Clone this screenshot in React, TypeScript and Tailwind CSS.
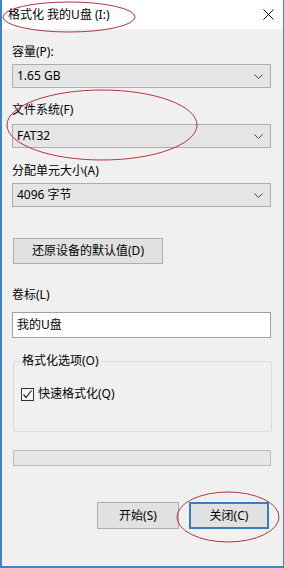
import React from "react";

const font = { fontFamily: '"Noto Sans", "Noto Sans CJK SC", sans-serif' };

const Chevron = () => (
  <svg width="9" height="5" viewBox="0 0 9 5" className="shrink-0">
    <path d="M0.5 0.5 L4.5 4.5 L8.5 0.5" fill="none" stroke="#4a4a4a" strokeWidth="1" />
  </svg>
);

const Select = ({ value }: { value: string }) => (
  <div className="flex h-[24px] w-[259px] items-center justify-between border border-[#adadad] bg-[#e5e5e5] pl-[4px] pr-[7px] text-[12px] text-black">
    <span>{value}</span>
    <Chevron />
  </div>
);

export default function App() {
  return (
    <div
      className="relative flex h-[568px] w-[284px] flex-col overflow-hidden border-b-2 border-l-2 border-r border-[#3f86c0] bg-[#f0f0f0]"
      style={font}
    >
      {/* title bar */}
      <div className="flex h-[29px] shrink-0 items-center justify-between bg-white pl-[6px] pr-[9px] text-[12px] text-black">
        <span>格式化 我的U盘 (I:)</span>
        <svg width="11" height="11" viewBox="0 0 11 11">
          <path d="M0.5 0.5 L10.5 10.5 M10.5 0.5 L0.5 10.5" stroke="#111" strokeWidth="1" />
        </svg>
      </div>

      <div className="flex flex-col pl-[10px] text-[12px] text-black">
        <div className="mt-[15px] h-[16px] leading-[16px]">容量(P):</div>
        <div className="mt-[4px]">
          <Select value="1.65 GB" />
        </div>

        <div className="mt-[14px] h-[16px] leading-[16px]">文件系统(F)</div>
        <div className="mt-[6px]">
          <Select value="FAT32" />
        </div>

        <div className="mt-[15px] h-[16px] leading-[16px]">分配单元大小(A)</div>
        <div className="mt-[4px]">
          <Select value="4096 字节" />
        </div>

        <button className="ml-[1px] mt-[31px] flex h-[26px] w-[150px] items-center justify-center border border-[#adadad] bg-[#e1e1e1] text-[12px]">
          还原设备的默认值(D)
        </button>

        <div className="mt-[23px] h-[16px] leading-[16px]">卷标(L)</div>
        <div className="mt-[9px] flex h-[26px] w-[259px] items-center border border-[#a0a0a0] bg-white pl-[4px]">
          我的U盘
        </div>

        {/* group box */}
        <div className="relative ml-[1px] mt-[23px] h-[71px] w-[259px] rounded-[2px] border border-[#dcdcdc]">
          <span className="absolute left-[6px] top-[-9px] bg-[#f0f0f0] px-[2px] leading-[16px]">
            格式化选项(O)
          </span>
          <div className="ml-[7px] mt-[23px] flex items-center gap-[4px]">
            <div className="flex h-[13px] w-[13px] items-center justify-center border border-[#333] bg-[#f7f7f7]">
              <svg width="11" height="11" viewBox="0 0 11 11">
                <path d="M1.5 5.5 L4 8.5 L9.5 1.5" fill="none" stroke="#222" strokeWidth="1.2" />
              </svg>
            </div>
            <span>快速格式化(Q)</span>
          </div>
        </div>

        <div className="ml-[1px] mt-[18px] h-[16px] w-[258px] border border-[#bcbcbc] bg-[#e6e6e6]" />

        <div className="mt-[36px] flex gap-[10px] pl-[85px]">
          <button className="flex h-[27px] w-[82px] items-center justify-center border border-[#adadad] bg-[#e1e1e1]">
            开始(S)
          </button>
          <button className="flex h-[27px] w-[80px] items-center justify-center border-2 border-[#3a7dbf] bg-[#e1e1e1]">
            关闭(C)
          </button>
        </div>
      </div>

      {/* hand-drawn annotation marks */}
      <svg className="pointer-events-none absolute left-[-2px] top-0" width="284" height="568">
        <ellipse cx="69" cy="17" rx="66" ry="15" fill="none" stroke="#b5333f" strokeWidth="1" />
        <ellipse cx="102" cy="125" rx="95" ry="35" fill="none" stroke="#b5333f" strokeWidth="1" />
        <ellipse cx="228" cy="517" rx="51" ry="25" fill="none" stroke="#b5333f" strokeWidth="1" />
      </svg>
    </div>
  );
}
